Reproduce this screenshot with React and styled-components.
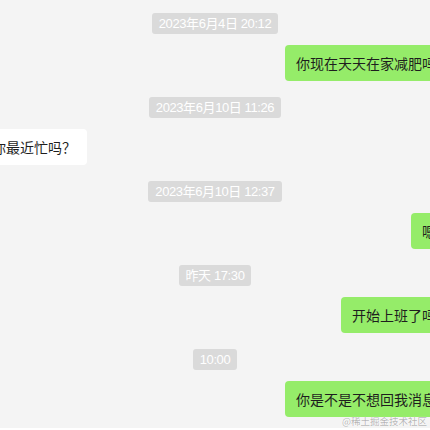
import React from 'react';
import styled, { createGlobalStyle } from 'styled-components';

const GlobalStyle = createGlobalStyle`
    html, body {
        margin: 0;
        padding: 0;
        background: #ffffff;
    }
`

const messages = [
    { time: '2023年6月4日 20:12', text: '你现在天天在家减肥吗', mine: true },
    { time: '2023年6月10日 11:26', text: '你最近忙吗？', mine: false },
    { time: '2023年6月10日 12:37', text: '嗯', mine: true },
    { time: '昨天 17:30', text: '开始上班了吗', mine: true },
    { time: '10:00', text: '你是不是不想回我消息', mine: true },
]

const App = () => {
    return (
        <>
            <GlobalStyle />
            <Chat>
                {messages.map((m, i) => (
                    <Group key={i}>
                        <TimeRow>
                            <Time>{m.time}</Time>
                        </TimeRow>
                        <Row mine={m.mine}>
                            <Bubble mine={m.mine}>{m.text}</Bubble>
                        </Row>
                    </Group>
                ))}
                <Watermark>@稀土掘金技术社区</Watermark>
            </Chat>
        </>
    );
};

const Chat = styled.div`
    position: relative;
    width: 430px;
    height: 428px;
    overflow: hidden;
    background: #f4f4f4;
    padding-top: 13px;
    box-sizing: border-box;
    display: flex;
    flex-direction: column;
    gap: 16px;
`

const Group = styled.div`
    display: flex;
    flex-direction: column;
    gap: 11px;
`

const TimeRow = styled.div`
    display: flex;
    justify-content: center;
`

const Time = styled.span`
    height: 21px;
    line-height: 21px;
    padding: 0 7px;
    border-radius: 3px;
    background: #dadada;
    color: #ffffff;
    font-family: "Liberation Sans", "Noto Sans CJK SC", sans-serif;
    font-size: 13px;
    letter-spacing: -0.4px;
    white-space: nowrap;
`

const Row = styled.div`
    display: flex;
    justify-content: ${props => props.mine ? 'flex-end' : 'flex-start'};
    margin: 0 -17px 0 -19px;
`

const Bubble = styled.div`
    height: 36px;
    box-sizing: border-box;
    padding: 8px 11px;
    line-height: 20px;
    border-radius: 4px;
    background: ${props => props.mine ? '#95ec69' : '#ffffff'};
    color: #1e1e1e;
    font-family: "Noto Sans CJK SC", sans-serif;
    font-size: 14px;
    white-space: nowrap;
`

const Watermark = styled.span`
    position: absolute;
    right: 3px;
    bottom: 1px;
    font-family: "Noto Sans CJK SC", sans-serif;
    font-size: 9.5px;
    line-height: 12px;
    color: rgba(0, 0, 0, 0.3);
    text-shadow: 0 0 1px #ffffff;
    white-space: nowrap;
`

export default App;
